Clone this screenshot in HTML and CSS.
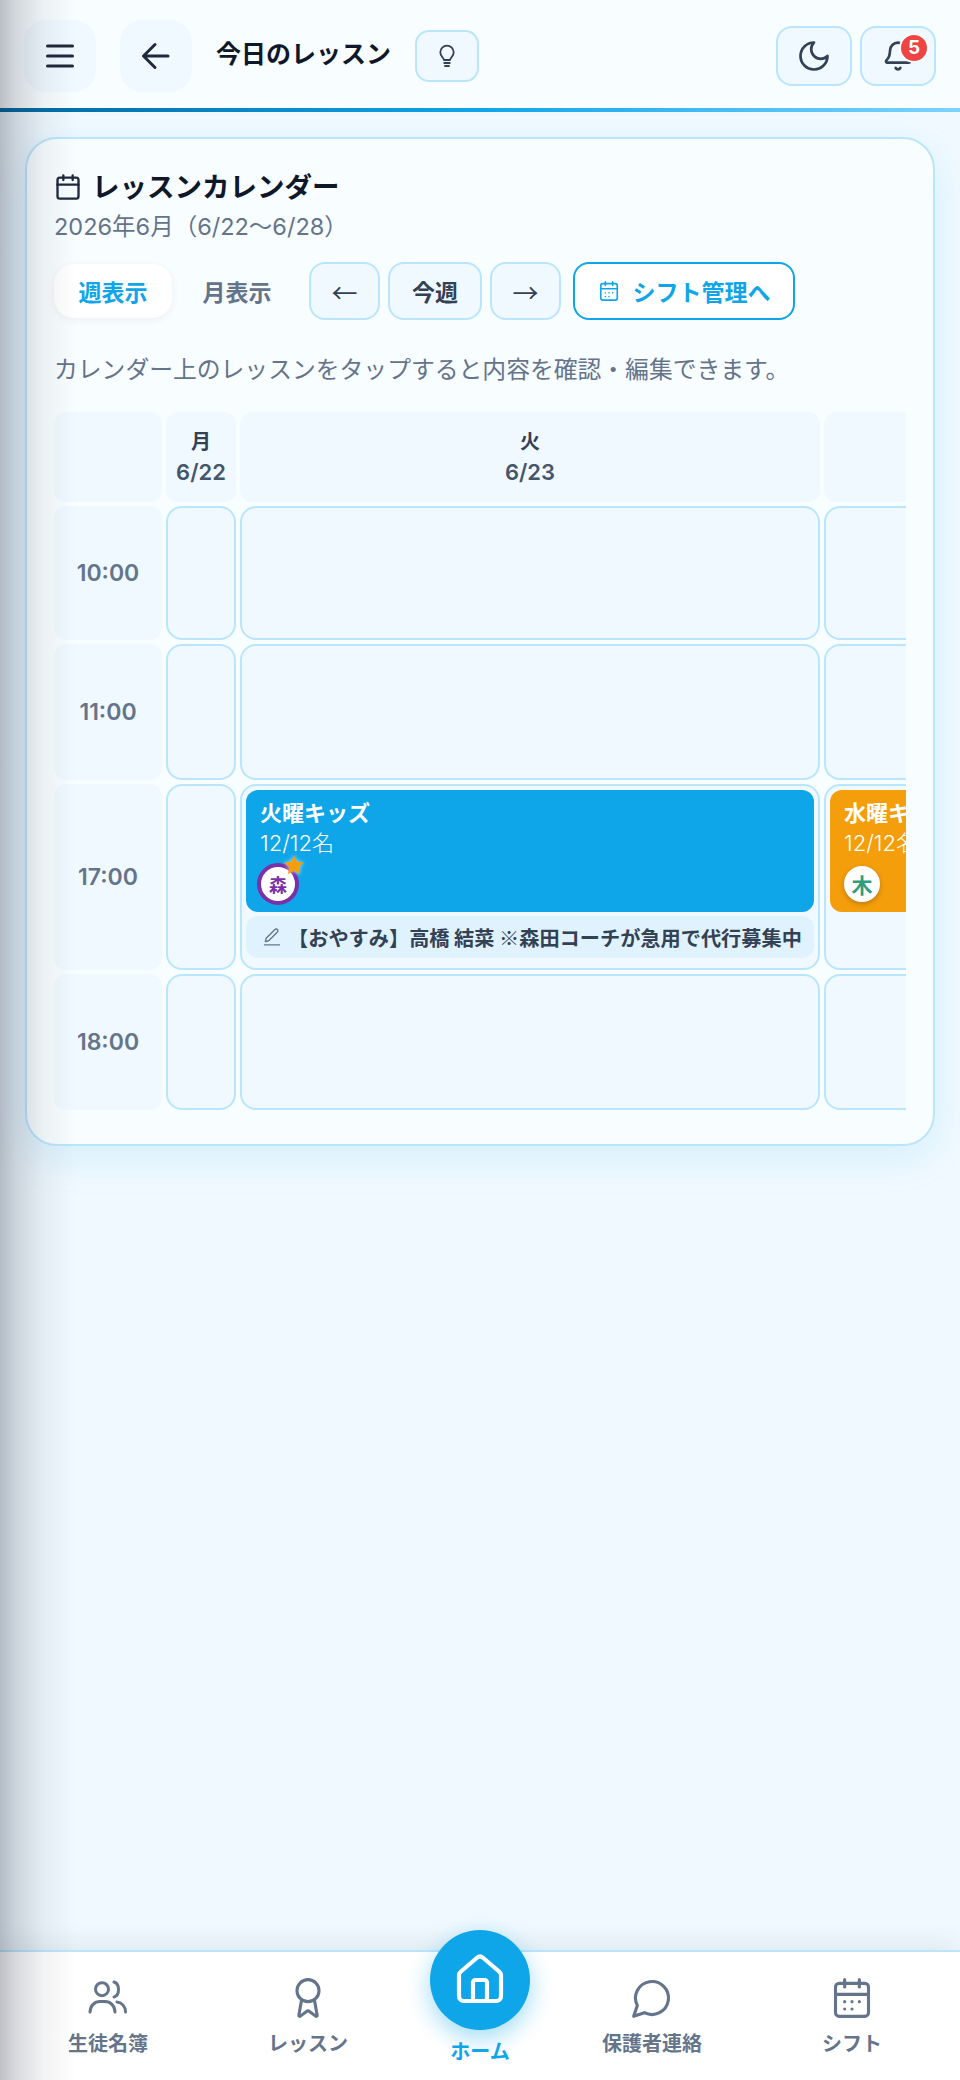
FILE: index.html
```html
<!DOCTYPE html>
<html lang="ja">
<head>
  <meta charset="UTF-8">
  <meta name="viewport" content="width=device-width, initial-scale=1.0">
  <title>今日のレッスン</title>
  <link rel="stylesheet" href="styles.css">
</head>
<body>
  <div class="edge-shade"></div>

  <header class="topbar">
    <button class="plain-btn">
      <svg class="icon" width="36" height="36" viewBox="0 0 36 36" stroke-width="3"><path d="M5.5 8h25M5.5 18h25M5.5 28h25"/></svg>
    </button>
    <button class="plain-btn">
      <svg class="icon" width="36" height="36" viewBox="0 0 36 36" stroke-width="3"><path d="M17 6.500 5.500 18 17 29.500M5.500 18H30"/></svg>
    </button>
    <h1 class="page-title">今日のレッスン</h1>
    <button class="hint-btn">
      <svg class="icon thin" width="24" height="24" viewBox="0 0 24 24" stroke-width="1.800"><path d="M9 16c-.2-1.200-.8-2-1.700-2.900a6.700 6.700 0 1 1 9.400 0c-.9.900-1.500 1.700-1.700 2.900zM9.200 19h5.600M10 22h4"/></svg>
    </button>
    <div class="top-right">
      <button class="tool-btn">
        <svg class="icon thin" width="36" height="36" viewBox="0 0 24 24" stroke-width="1.800"><path d="M12 3a6 6 0 0 0 9 9 9 9 0 1 1-9-9Z"/></svg>
      </button>
      <button class="tool-btn">
        <svg class="icon thin" width="32" height="32" viewBox="0 0 24 24" stroke-width="2"><path d="M10.268 21a2 2 0 0 0 3.464 0"/><path d="M3.262 15.326A1 1 0 0 0 4 17h16a1 1 0 0 0 .74-1.673C19.410 13.956 18 12.499 18 8A6 6 0 0 0 6 8c0 4.499-1.411 5.956-2.738 7.326"/></svg>
        <span class="badge">5</span>
      </button>
    </div>
  </header>
  <div class="top-line"></div>

  <main class="content">
    <section class="card">
      <div class="card-head">
        <svg class="icon dark" width="28" height="28" viewBox="0 0 24 24" stroke-width="2"><path d="M8 2v4M16 2v4M3 10h18"/><rect x="3" y="4" width="18" height="18" rx="2"/></svg>
        <h2>レッスンカレンダー</h2>
      </div>
      <p class="range">2026年6月（6/22〜6/28）</p>

      <div class="toolbar">
        <div class="tabs">
          <button class="tab active">週表示</button>
          <button class="tab">月表示</button>
        </div>
        <button class="nav-btn arrow">←</button>
        <button class="nav-btn week">今週</button>
        <button class="nav-btn arrow">→</button>
        <button class="shift-btn">
          <svg class="icon" width="22" height="22" viewBox="0 0 24 24" stroke-width="1.800"><path d="M8 2v4M16 2v4M3 9.500h18"/><rect x="3" y="4" width="18" height="18" rx="2"/><path class="dots" d="M8 14h.01M12 14h.01M16 14h.01M8 18h.01M12 18h.01"/></svg>
          シフト管理へ
        </button>
      </div>

      <p class="help">カレンダー上のレッスンをタップすると内容を確認・編集できます。</p>

      <div class="cal-scroll">
        <div class="cal-grid">
          <div class="head-cell"></div>
          <div class="head-cell"><b>月</b><span>6/22</span></div>
          <div class="head-cell"><b>火</b><span>6/23</span></div>
          <div class="head-cell"></div>

          <div class="time-cell">10:00</div>
          <div class="slot"></div>
          <div class="slot"></div>
          <div class="slot"></div>

          <div class="time-cell">11:00</div>
          <div class="slot"></div>
          <div class="slot"></div>
          <div class="slot"></div>

          <div class="time-cell">17:00</div>
          <div class="slot"></div>
          <div class="slot">
            <div class="lesson blue">
              <div class="lesson-name">火曜キッズ</div>
              <div class="lesson-count">12/12名</div>
              <div class="coach purple">森
                <svg class="star" width="22" height="22" viewBox="0 0 24 24"><path d="m12 1.500 3.200 6.900 7.500.9-5.500 5.200 1.400 7.500-6.600-3.700-6.600 3.700 1.400-7.500L1.300 9.300l7.500-.9z"/></svg>
              </div>
            </div>
            <div class="note">
              <svg class="pencil" width="20" height="20" viewBox="0 0 24 24" stroke-width="1.600"><path d="M3 21.500h18M4 17.500l1-4L15.500 3a2.100 2.100 0 0 1 3 3L8 16.500z"/></svg>
              <span>【おやすみ】高橋 結菜 ※森田コーチが急用で代行募集中</span>
            </div>
          </div>
          <div class="slot">
            <div class="lesson orange">
              <div class="lesson-name">水曜キッズ</div>
              <div class="lesson-count">12/12名</div>
              <div class="coach green">木</div>
            </div>
          </div>

          <div class="time-cell">18:00</div>
          <div class="slot"></div>
          <div class="slot"></div>
          <div class="slot"></div>
        </div>
      </div>
    </section>
  </main>

  <nav class="bottom-nav">
    <a class="nav-item">
      <svg class="icon" width="48" height="44" viewBox="0 4 48 44" stroke-width="3"><circle cx="18" cy="17.200" r="6.500"/><path d="M30 10c6 1.500 6 13.500 0 15M6 40c0-6.500 5-10.500 10-10.500h5c5 0 10 4 10 10.500M33 30c5 .5 8.500 4.500 8.500 10"/></svg>
      <span>生徒名簿</span>
    </a>
    <a class="nav-item">
      <svg class="icon" width="44" height="44" viewBox="0 0 24 24" stroke-width="1.700"><path d="m15.477 12.890 1.515 8.526a.5.5 0 0 1-.81.470l-3.580-2.687a1 1 0 0 0-1.197 0l-3.586 2.686a.5.5 0 0 1-.81-.469l1.514-8.526"/><circle cx="12" cy="8" r="6"/></svg>
      <span>レッスン</span>
    </a>
    <a class="nav-item home">
      <div class="home-circle">
        <svg width="56" height="56" viewBox="0 0 24 24" fill="none" stroke="#fff" stroke-width="1.800" stroke-linecap="round" stroke-linejoin="round"><path d="M15 21v-8a1 1 0 0 0-1-1h-4a1 1 0 0 0-1 1v8"/><path d="M3 10a2 2 0 0 1 .709-1.528l7-5.999a2 2 0 0 1 2.582 0l7 5.999A2 2 0 0 1 21 10v9a2 2 0 0 1-2 2H5a2 2 0 0 1-2-2z"/></svg>
      </div>
      <span>ホーム</span>
    </a>
    <a class="nav-item">
      <svg class="icon" width="44" height="44" viewBox="0 0 24 24" stroke-width="1.700"><path d="M7.900 20A9 9 0 1 0 4 16.100L2 22Z"/></svg>
      <span>保護者連絡</span>
    </a>
    <a class="nav-item">
      <svg class="icon" width="44" height="44" viewBox="0 0 24 24" stroke-width="1.700"><path d="M8 2v4M16 2v4M3 10h18"/><rect x="3" y="4" width="18" height="18" rx="2"/><path d="M8 14h.01M12 14h.01M16 14h.01M8 18h.01M12 18h.01"/></svg>
      <span>シフト</span>
    </a>
  </nav>
</body>
</html>
```

FILE: styles.css
```css
* {
  box-sizing: border-box;
}
html, body {
  margin: 0;
  padding: 0;
}
body {
  position: relative;
  display: flex;
  flex-direction: column;
  width: 960px;
  height: 2080px;
  overflow: hidden;
  background: #f0f9ff;
  font-family: Inter, "Noto Sans CJK JP", sans-serif;
  color: #0f172a;
}
button {
  font-family: inherit;
  cursor: pointer;
  padding: 0;
}
h1, h2, p {
  margin: 0;
}
.icon {
  fill: none;
  stroke: currentColor;
  stroke-linecap: round;
  stroke-linejoin: round;
  flex-shrink: 0;
}

/* shade along the left side of the window */
.edge-shade {
  position: absolute;
  top: 0;
  left: 0;
  bottom: 0;
  width: 76px;
  z-index: 10;
  pointer-events: none;
  background: linear-gradient(to right, rgba(15, 23, 42, 0.27), rgba(15, 23, 42, 0.16) 16px, rgba(15, 23, 42, 0.05) 44px, rgba(15, 23, 42, 0));
}

/* top bar */
.topbar {
  display: flex;
  align-items: center;
  height: 108px;
  padding: 4px 24px 0;
  background: #f8fdff;
}
.plain-btn {
  display: flex;
  align-items: center;
  justify-content: center;
  width: 72px;
  height: 72px;
  margin-right: 24px;
  border: none;
  border-radius: 22px;
  background: #f0f9ff;
  color: #1e293b;
}
.page-title {
  font-size: 25px;
  font-weight: 700;
  line-height: 36px;
  margin-right: 24px;
  margin-top: -4px;
}
.hint-btn {
  display: flex;
  align-items: center;
  justify-content: center;
  width: 64px;
  height: 52px;
  border: 2px solid #bae6fd;
  border-radius: 14px;
  background: #f0f9ff;
  color: #334155;
}
.top-right {
  display: flex;
  gap: 8px;
  margin-left: auto;
}
.tool-btn {
  position: relative;
  display: flex;
  align-items: center;
  justify-content: center;
  width: 76px;
  height: 60px;
  border: 2px solid #bae6fd;
  border-radius: 16px;
  background: #f0f9ff;
  color: #334155;
}
.badge {
  position: absolute;
  top: 5px;
  right: 5px;
  width: 30px;
  height: 30px;
  border: 2px solid #fff;
  border-radius: 50%;
  background: #ef4444;
  color: #fff;
  font-size: 19px;
  font-weight: 700;
  line-height: 26px;
  text-align: center;
}
.top-line {
  height: 4px;
  background: linear-gradient(to right, #0369a1, #0ea5e9 50%, #7dd3fc);
}

/* card */
.content {
  flex: 1;
  padding: 25px 25px 0;
}
.card {
  padding: 28px 27px 34px;
  border: 2px solid #bae6fd;
  border-radius: 32px;
  background: #f8fdff;
  box-shadow: 0 12px 40px rgba(14, 165, 233, 0.12);
}
.card-head {
  display: flex;
  align-items: center;
  gap: 10px;
  height: 40px;
}
.card-head .icon {
  color: #1e293b;
}
.card-head h2 {
  font-size: 27.500px;
  font-weight: 700;
  line-height: 40px;
}
.range {
  margin-top: 4px;
  font-size: 23.500px;
  line-height: 32px;
  color: #64748b;
}

.toolbar {
  display: flex;
  align-items: center;
  gap: 8px;
  margin-top: 19px;
}
.tabs {
  display: flex;
  gap: 6px;
  margin-right: 5px;
}
.tab {
  width: 118px;
  height: 54px;
  border: none;
  border-radius: 20px;
  background: transparent;
  color: #64748b;
  font-size: 23px;
  font-weight: 700;
}
.tab.active {
  background: #fff;
  color: #0ea5e9;
  box-shadow: 0 2px 8px rgba(15, 23, 42, 0.06);
}
.nav-btn {
  height: 58px;
  border: 2px solid #bae6fd;
  border-radius: 16px;
  background: #f0f9ff;
  color: #334155;
  font-size: 23px;
  font-weight: 700;
}
.nav-btn.arrow {
  width: 71px;
  font-family: "Noto Sans CJK JP", sans-serif;
  font-size: 26px;
  font-weight: 400;
}
.nav-btn.week {
  width: 94px;
}
.shift-btn {
  display: flex;
  align-items: center;
  justify-content: center;
  gap: 13px;
  width: 222px;
  height: 58px;
  margin-left: 4px;
  border: 2px solid #0ea5e9;
  border-radius: 16px;
  background: #fff;
  color: #0ea5e9;
  font-size: 23px;
  font-weight: 700;
}
.help {
  margin-top: 33px;
  font-size: 23.800px;
  line-height: 34px;
  color: #64748b;
}

/* calendar */
.cal-scroll {
  margin-top: 25px;
  overflow: hidden;
}
.cal-grid {
  display: grid;
  grid-template-columns: 108px 70px 580px 580px;
  grid-template-rows: 90px 134px 136px 186px 136px;
  gap: 4px;
  width: max-content;
}
.head-cell {
  display: flex;
  flex-direction: column;
  align-items: center;
  justify-content: center;
  border-radius: 12px;
  background: #f0f9ff;
  font-size: 20px;
  line-height: 30px;
  color: #475569;
}
.head-cell b {
  color: #334155;
  font-weight: 700;
}
.head-cell span {
  font-size: 22px;
  font-weight: 600;
}
.time-cell {
  display: flex;
  align-items: center;
  justify-content: center;
  border-radius: 12px;
  background: #f0f9ff;
  color: #64748b;
  font-size: 23px;
  font-weight: 600;
}
.slot {
  padding: 4px;
  border: 2px solid #bae6fd;
  border-radius: 16px;
  background: #f0f9ff;
}
.lesson {
  position: relative;
  height: 122px;
  padding: 8px 14px;
  border-radius: 12px;
  color: #fff;
  white-space: nowrap;
}
.lesson.blue {
  background: #0ea5e9;
}
.lesson.orange {
  background: #f59e0b;
}
.lesson-name {
  font-size: 22px;
  font-weight: 700;
  line-height: 30px;
}
.lesson-count {
  font-size: 22px;
  font-weight: 300;
  line-height: 30px;
}
.coach {
  position: absolute;
  left: 11px;
  top: 73px;
  display: flex;
  align-items: center;
  justify-content: center;
  width: 42px;
  height: 42px;
  border-radius: 50%;
  background: #fff;
  font-size: 18px;
  font-weight: 700;
}
.coach.purple {
  border: 4px solid #7b2fa8;
  color: #7b2fa8;
}
.coach.green {
  top: 76px;
  left: 14px;
  width: 36px;
  height: 36px;
  font-size: 21px;
  font-weight: 600;
  color: #2f9e7c;
  box-shadow: 0 2px 5px rgba(15, 23, 42, 0.25);
}
.star {
  position: absolute;
  top: -13px;
  right: -10px;
  fill: #f59e0b;
  filter: drop-shadow(0 0 2px rgba(255, 255, 255, 0.7));
}
.note {
  display: flex;
  align-items: center;
  gap: 6px;
  height: 42px;
  margin-top: 4px;
  padding: 0 12px 0 16px;
  border-radius: 12px;
  background: #e0f2fe;
  color: #334155;
  font-family: "Noto Sans CJK JP", sans-serif;
  font-size: 20.200px;
  font-weight: 600;
  white-space: nowrap;
}
.pencil {
  fill: none;
  stroke: #64748b;
  stroke-linecap: round;
  stroke-linejoin: round;
  flex-shrink: 0;
}

/* bottom nav */
.bottom-nav {
  display: grid;
  grid-template-columns: 200px 200px 144px 200px 200px;
  height: 130px;
  padding: 0 8px;
  border-top: 2px solid #bae6fd;
  background: #fff;
  box-shadow: 0 -8px 24px rgba(15, 23, 42, 0.07);
}
.nav-item {
  display: flex;
  flex-direction: column;
  align-items: center;
  padding-top: 24px;
  color: #64748b;
}
.nav-item span {
  margin-top: 10px;
  font-size: 20px;
  font-weight: 700;
  line-height: 28px;
}
.nav-item.home {
  position: relative;
  color: #0ea5e9;
  padding-top: 0;
}
.home-circle {
  display: flex;
  align-items: center;
  justify-content: center;
  width: 100px;
  height: 100px;
  margin-top: -22px;
  border-radius: 50%;
  background: #0ea5e9;
  box-shadow: 0 8px 24px rgba(14, 165, 233, 0.4);
}
.nav-item.home span {
  margin-top: 8px;
}
```
